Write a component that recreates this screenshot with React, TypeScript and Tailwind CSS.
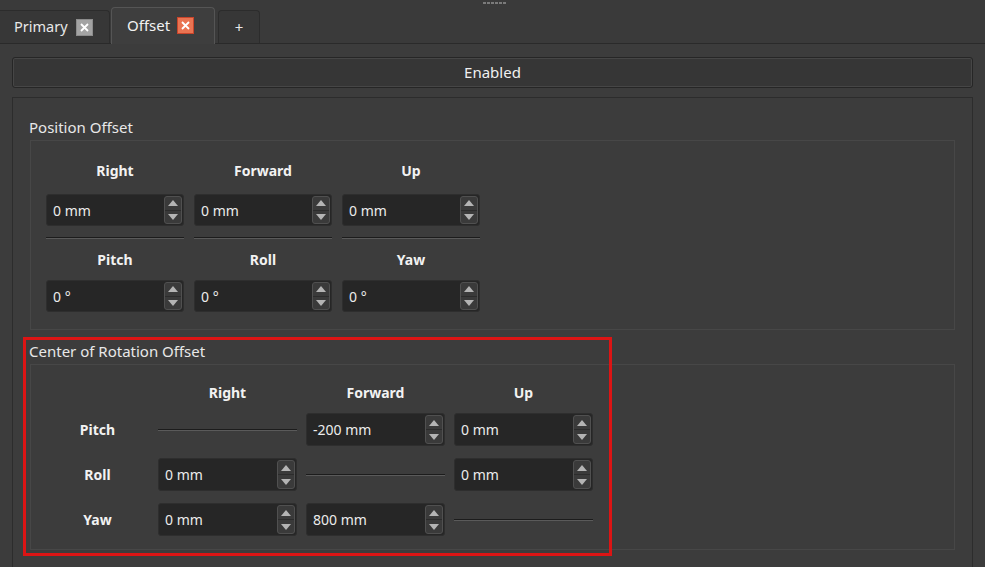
const font = "font-['Noto_Sans','Open_Sans',sans-serif]";

function CloseBox({ active }: { active?: boolean }) {
  return (
    <span
      className={
        "flex h-[17px] w-[17px] items-center justify-center border " +
        (active ? "bg-[#ea7452] border-[#c9452b]" : "bg-[#a3a3a3] border-[#8c8c8c]")
      }
    >
      <svg width="11" height="11" viewBox="0 0 11 11">
        <path d="M2 2 L9 9 M9 2 L2 9" stroke="#ffffff" strokeWidth="1.8" />
      </svg>
    </span>
  );
}

function Spin({ value }: { value: string }) {
  return (
    <div className="flex h-full w-full items-stretch rounded-[3px] border border-[#2e2e2e] bg-[#262626]">
      <div className="flex flex-1 items-center pl-[6px] text-[14px] text-[#ececec]">{value}</div>
      <div className="my-[1px] mr-[1px] flex w-[18px] flex-col rounded-[3px] border border-[#505050] bg-[#3a3a3a]">
        <div className="flex flex-1 items-center justify-center border-b border-[#2c2c2c]">
          <svg width="10" height="6" viewBox="0 0 10 6">
            <path d="M0 6 L5 0 L10 6 Z" fill="#b4b4b4" />
          </svg>
        </div>
        <div className="flex flex-1 items-center justify-center">
          <svg width="10" height="6" viewBox="0 0 10 6">
            <path d="M0 0 L5 6 L10 0 Z" fill="#b4b4b4" />
          </svg>
        </div>
      </div>
    </div>
  );
}

function Line() {
  return (
    <div className="flex h-full w-full items-center">
      <div className="h-[2px] w-full border-b border-[#5a5a5a] bg-[#1c1c1c]" />
    </div>
  );
}

function Label({ text }: { text: string }) {
  return <div className="text-center text-[14px] font-bold leading-[18px] text-[#f2f2f2]">{text}</div>;
}

export default function App() {
  const pos = ["Right", "Forward", "Up"];
  const rot = ["Pitch", "Roll", "Yaw"];
  const table: (string | null)[][] = [
    [null, "-200 mm", "0 mm"],
    ["0 mm", null, "0 mm"],
    ["0 mm", "800 mm", null],
  ];

  return (
    <div className={"relative h-[567px] w-[985px] overflow-hidden bg-[#3c3c3c] " + font}>
      {/* grip */}
      <div className="absolute left-[483px] top-[2px] flex gap-[1px]">
        {[0, 1, 2, 3, 4, 5].map((i) => (
          <span key={i} className="h-[2px] w-[3px] bg-[#7a7a7a]" />
        ))}
      </div>

      {/* tabs */}
      <div className="flex h-[44px] items-end border-b border-[#2a2a2a] bg-[#3a3a3a]">
        <div className="flex h-[33px] w-[110px] items-center gap-[8px] rounded-tr-[4px] border border-b-0 border-l-0 border-[#2c2c2c] bg-[#373737] pl-[14px] text-[14.5px] text-[#e8e8e8]">
          <span>Primary</span>
          <CloseBox />
        </div>
        <div className="relative top-[1px] ml-[1px] flex h-[37px] w-[104px] items-center gap-[7px] rounded-t-[4px] border border-b-0 border-[#555555] bg-[#3e3e3e] pl-[15px] pb-[2px] text-[15px] text-[#f2f2f2]">
          <span>Offset</span>
          <CloseBox active />
        </div>
        <div className="ml-[3px] flex h-[33px] w-[42px] items-center justify-center rounded-t-[4px] border border-b-0 border-[#2c2c2c] bg-[#373737] text-[15px] text-[#e8e8e8]">
          +
        </div>
      </div>

      <div className="px-[12px] pt-[13px]">
        <div className="flex h-[31px] items-center justify-center rounded-[3px] border border-[#262626] bg-[#363636] text-[15px] text-[#f0f0f0] shadow-[inset_0_0_0_1px_#464646]">
          Enabled
        </div>

        <div className="mt-[9px] h-[500px] w-[961px] border border-[#2c2c2c] px-[17px] pt-[20px]">
          <div className="-ml-[1px] text-[15px] leading-[18px] text-[#e8e8e8]">Position Offset</div>
          <div className="mt-[4px] border border-[#474747] px-[15px] pt-[21px] pb-[17px]">
            <div className="grid w-[434px] grid-cols-3 gap-x-[10px]">
              {pos.map((p) => (
                <Label key={p} text={p} />
              ))}
              {pos.map((p) => (
                <div key={p} className="mt-[14px] h-[32px]">
                  <Spin value="0 mm" />
                </div>
              ))}
              {pos.map((p) => (
                <div key={p} className="mt-[11px] h-[2px]">
                  <Line />
                </div>
              ))}
              {rot.map((p) => (
                <div key={p} className="mt-[12px]">
                  <Label text={p} />
                </div>
              ))}
              {rot.map((p) => (
                <div key={p} className="mt-[11px] h-[32px]">
                  <Spin value="0 °" />
                </div>
              ))}
            </div>
          </div>

          <div className="-ml-[1px] mt-[12px] text-[15px] leading-[18px] text-[#e8e8e8]">Center of Rotation Offset</div>
          <div className="mt-[4px] h-[186px] border border-[#474747] pl-[15px] pt-[19px]">
            <div className="grid w-[547px] grid-cols-[103px_139px_139px_139px] gap-x-[9px]">
              <div />
              {pos.map((p) => (
                <Label key={p} text={p} />
              ))}
              {rot.map((r, ri) => (
                <div key={r} className="contents">
                  <div className={"flex items-center justify-center " + (ri === 0 ? "mt-[11px]" : "mt-[12px]")}>
                    <Label text={r} />
                  </div>
                  {table[ri].map((v, ci) => (
                    <div key={ci} className={"h-[33px] " + (ri === 0 ? "mt-[11px]" : "mt-[12px]")}>
                      {v === null ? <Line /> : <Spin value={v} />}
                    </div>
                  ))}
                </div>
              ))}
            </div>
          </div>
        </div>
      </div>

      {/* highlight annotation */}
      <div className="pointer-events-none absolute left-[23px] top-[337px] h-[219px] w-[589px] border-[3px] border-[#dc1414]" />
    </div>
  );
}
